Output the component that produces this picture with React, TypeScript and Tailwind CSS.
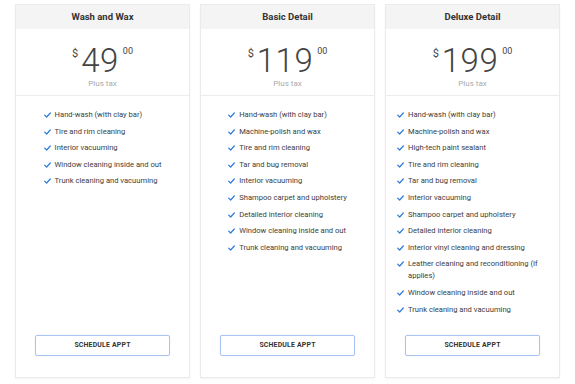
import type { ReactNode } from "react";

interface Plan {
  name: string;
  price: string;
  features: string[];
}

const plans: Plan[] = [
  {
    name: "Wash and Wax",
    price: "49",
    features: [
      "Hand-wash (with clay bar)",
      "Tire and rim cleaning",
      "Interior vacuuming",
      "Window cleaning inside and out",
      "Trunk cleaning and vacuuming",
    ],
  },
  {
    name: "Basic Detail",
    price: "119",
    features: [
      "Hand-wash (with clay bar)",
      "Machine-polish and wax",
      "Tire and rim cleaning",
      "Tar and bug removal",
      "Interior vacuuming",
      "Shampoo carpet and upholstery",
      "Detailed interior cleaning",
      "Window cleaning inside and out",
      "Trunk cleaning and vacuuming",
    ],
  },
  {
    name: "Deluxe Detail",
    price: "199",
    features: [
      "Hand-wash (with clay bar)",
      "Machine-polish and wax",
      "High-tech paint sealant",
      "Tire and rim cleaning",
      "Tar and bug removal",
      "Interior vacuuming",
      "Shampoo carpet and upholstery",
      "Detailed interior cleaning",
      "Interior vinyl cleaning and dressing",
      "Leather cleaning and reconditioning (If applies)",
      "Window cleaning inside and out",
      "Trunk cleaning and vacuuming",
    ],
  },
];

function Check() {
  return (
    <svg viewBox="0 0 10 8" className="mt-[3px] h-[6px] w-[7px] shrink-0" aria-hidden>
      <path d="M1 4.2 L3.8 6.8 L9 1.2" fill="none" stroke="#2f7bdc" strokeWidth="1.8" strokeLinecap="round" strokeLinejoin="round" />
    </svg>
  );
}

function Feature({ children }: { children: ReactNode }) {
  return (
    <li className="flex items-start gap-[4px]">
      <Check />
      <span>{children}</span>
    </li>
  );
}

function PlanCard({ plan }: { plan: Plan }) {
  return (
    <div className="flex h-[374px] flex-1 flex-col border border-[#ebebeb] bg-white shadow-[0_1px_2px_rgba(0,0,0,0.05)]">
      <div className="flex h-[24px] items-center justify-center bg-[#f4f4f4] text-[9.5px] font-bold text-[#333]">
        {plan.name}
      </div>
      <div className="flex h-[67px] flex-col items-center border-b border-[#ececec]">
        <div className="mt-[17px] flex items-start text-[#444]">
          <span className="mt-[2px] mr-[3px] text-[11px] leading-none">$</span>
          <span className="text-[33px] leading-[30px] font-light tracking-[0.5px]">{plan.price}</span>
          <span className="mt-[1px] ml-[4px] text-[9px] leading-none">00</span>
        </div>
        <div className="mt-[2px] text-[8px] leading-[12px] text-[#aaa]">Plus tax</div>
      </div>
      <div className="flex-1 pt-[13px]">
        <ul className="mx-auto flex w-fit max-w-[151px] flex-col gap-[4.6px] text-[7.6px] leading-[12px] text-[#3d3d3d]">
          {plan.features.map((f) => (
            <Feature key={f}>{f}</Feature>
          ))}
        </ul>
      </div>
      <button className="mx-[19px] mb-[21px] h-[21px] rounded-[2px] border border-[#a9c3f2] text-[6.9px] font-bold tracking-[0.2px] text-[#333] shadow-[0_0_1px_rgba(80,130,230,0.4)]">
        SCHEDULE APPT
      </button>
    </div>
  );
}

export default function App() {
  return (
    <div className="flex h-[384px] w-[575px] gap-[10px] bg-white px-[15px] pt-[4px] font-['Roboto','Liberation_Sans',sans-serif]">
      {plans.map((p) => (
        <PlanCard key={p.name} plan={p} />
      ))}
    </div>
  );
}
